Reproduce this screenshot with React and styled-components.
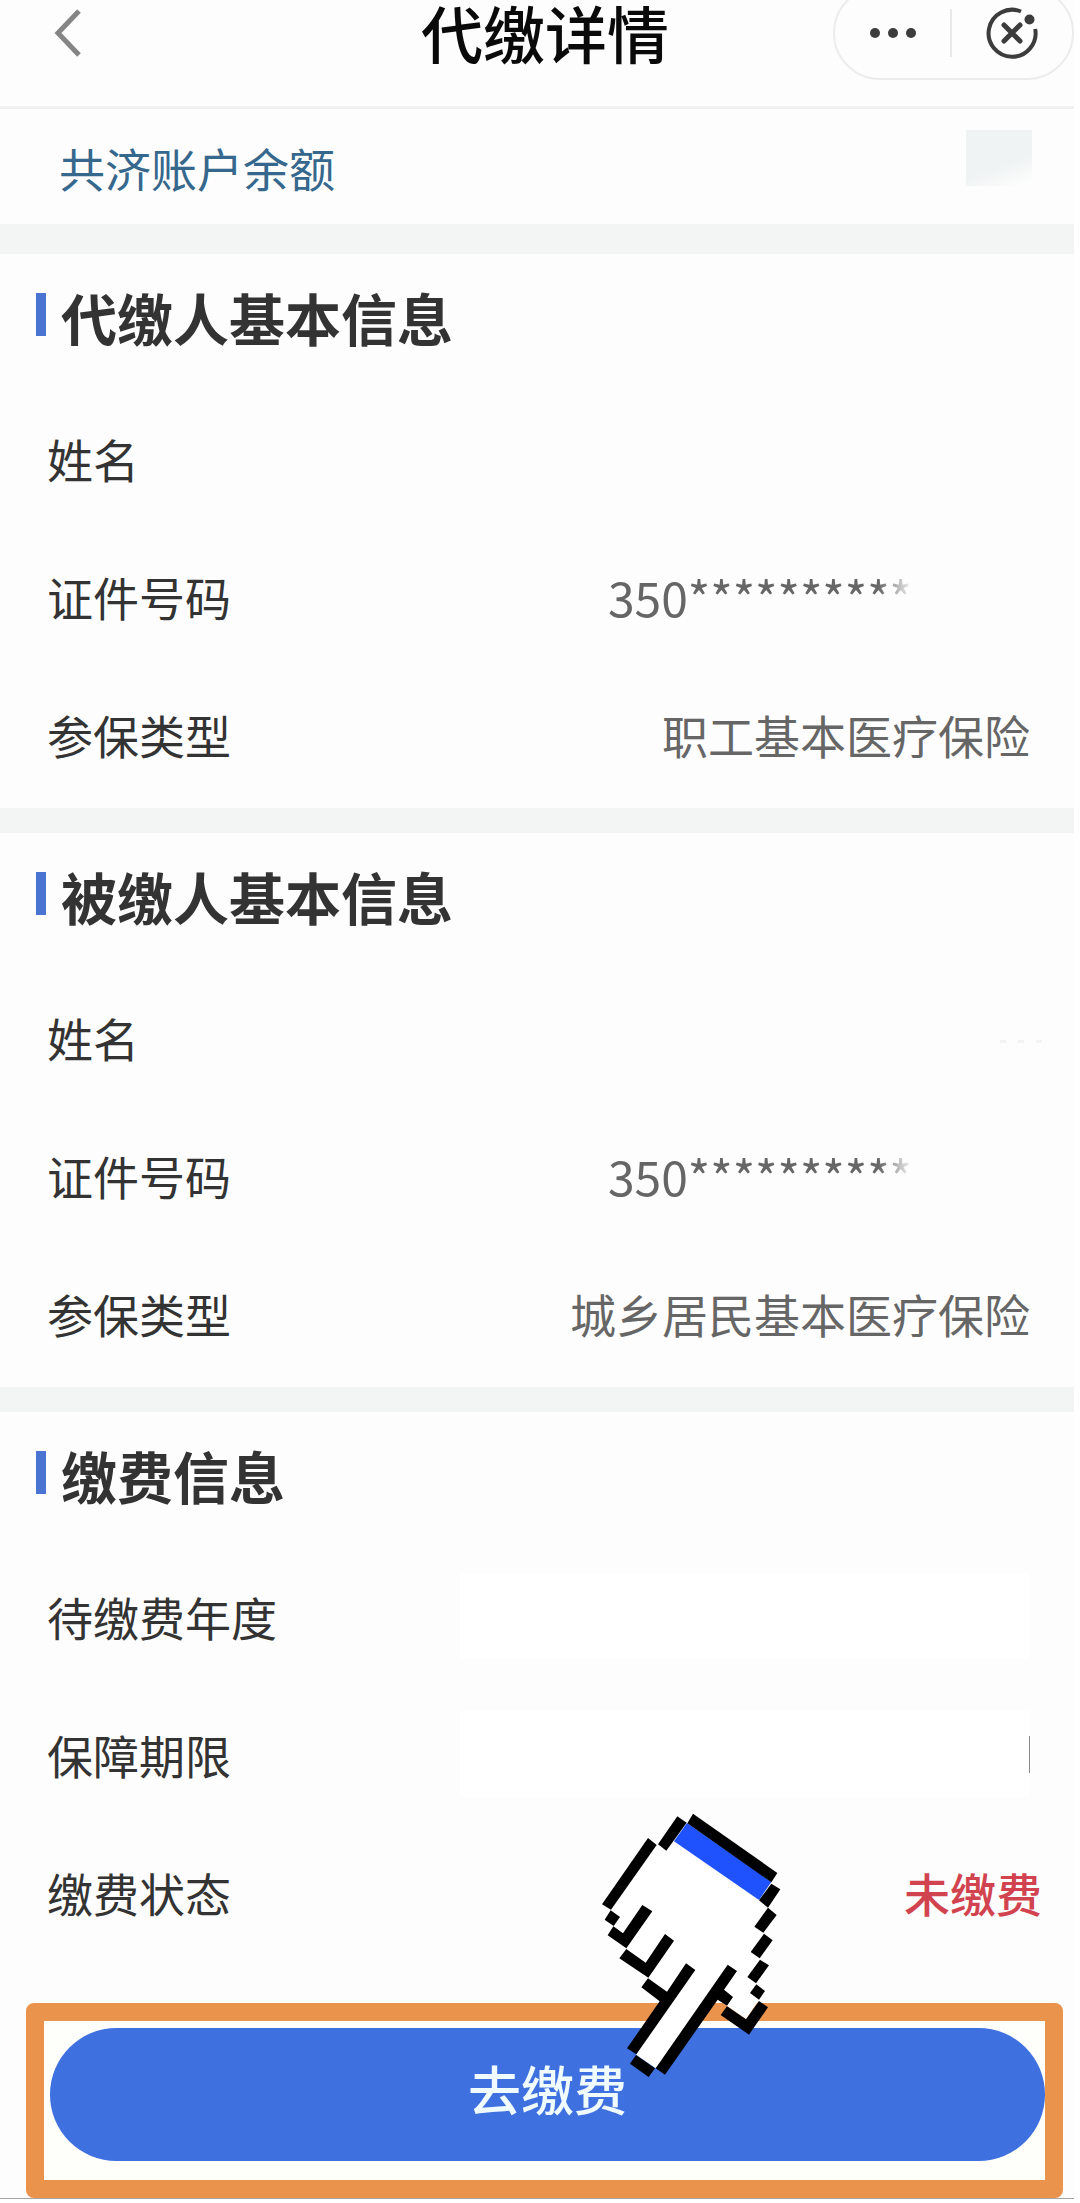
import React from 'react';
import styled, { createGlobalStyle } from 'styled-components';


const GlobalStyle = createGlobalStyle`
    * {
        box-sizing: border-box;
    }

    body {
        margin: 0;
        background-color: #ffffff;
        font-family: 'Noto Sans CJK SC', 'Noto Sans', sans-serif;
        color: #333333;
    }

    h1, h2, dl, dt, dd {
        margin: 0;
    }

    button {
        padding: 0;
        border: none;
        background: none;
        font-family: inherit;
        cursor: pointer;
    }
`;

const Page = styled.div`
    display: flow-root;
    margin: 0 6px 0 0;
    background-color: #fdfdfd;
    overflow: hidden;
`;

const Header = styled.header`
    display: grid;
    grid-template-columns: 1fr auto 1fr;
    align-items: center;
    margin: -14px 0 0 0;
    padding: 0 0 26px 16px;
    border-bottom: 3px solid #f1f1f1;
`;

const BackButton = styled.button`
    display: flex;
    justify-content: center;
    align-items: center;
    width: 104px;
    height: 94px;
`;

const HeaderTitle = styled.h1`
    padding: 0 0 2px 0;
    color: #0a0a0a;
    font-size: 62px;
    line-height: 62px;
    font-weight: 500;
`;

const Capsule = styled.div`
    display: flex;
    align-items: center;
    justify-self: end;
    width: 241px;
    height: 94px;
    border: 2px solid #ececec;
    border-radius: 47px;
`;

const CapsuleButton = styled.button`
    display: flex;
    justify-content: center;
    align-items: center;
    flex: ${props => props.$grow};
    height: 90px;
`;

const CapsuleDivider = styled.div`
    width: 2px;
    height: 48px;
    background-color: #e8e8e8;
`;

const BalanceRow = styled.div`
    display: flex;
    justify-content: space-between;
    align-items: flex-start;
    height: 115px;
    padding: 21px 42px 0 59px;
`;

const BalanceLabel = styled.div`
    padding: 2px 0 0 0;
    color: #35688c;
    font-size: 46px;
    line-height: 70px;
`;

const BalanceCover = styled.div`
    width: 66px;
    height: 56px;
    background: linear-gradient(160deg, #eff3f3 60%, #fdfdfd 95%);
`;

const Divider = styled.div`
    height: ${props => props.$size}px;
    background-color: #f3f5f5;
`;

const SectionContainer = styled.section`
    padding: 35px 0 2px 0;
`;

const SectionTitle = styled.h2`
    display: flex;
    align-items: flex-start;
    gap: 15px;
    margin: 0 0 47px 36px;
    font-size: 56px;
    line-height: 56px;
    font-weight: 700;

    &::before {
        content: '';
        width: 10px;
        height: 43px;
        margin: 4px 0 0 0;
        background-color: #4a74d2;
    }
`;

const Row = styled.div`
    display: flex;
    justify-content: space-between;
    align-items: center;
    height: 138px;
    padding: 0 44px 6px 47px;
    font-size: 46px;
    line-height: 70px;
`;

const Value = styled.dd`
    color: #666666;
`;

const MaskedNumber = styled(Value)`
    padding: 0 118px 0 0;
    font-size: 48px;
    mask-image: linear-gradient(to right, #000 270px, transparent 306px);
`;

const MaskedName = styled(Value)`
    display: flex;
    gap: 12px;
    margin: 0 -12px 0 0;
    padding: 8px 0 0 0;

    span {
        width: 6px;
        height: 3px;
        background-color: #f3f3f3;
    }
`;

const BlankValue = styled(Value)`
    width: 58%;
    height: 86px;
    background-color: #ffffff;
`;

const CursorValue = styled(BlankValue)`
    display: flex;
    justify-content: flex-end;
    align-items: center;

    &::after {
        content: '';
        width: 1px;
        height: 37px;
        background-color: #8a8a8a;
    }
`;

const StatusValue = styled.dd`
    margin: 0 -12px 0 0;
    color: #d1434f;
    font-weight: 500;
`;

const Footer = styled.footer`
    position: relative;
    padding: 37px 11px 0 26px;
    border-bottom: 1px solid #a5a5a5;
`;

const PayFrame = styled.div`
    padding: 7px 0 19px 6px;
    border: 18px solid #e9934c;
    border-radius: 8px;
    background-color: #fefefb;
`;

const PayButton = styled.button`
    display: block;
    width: 100%;
    height: 133px;
    padding: 0 0 14px 0;
    border-radius: 67px;
    background-color: #3e70e0;
    color: #f0fbff;
    font-size: 53px;
    line-height: 70px;
    font-weight: 500;
`;

const HandImg = styled.svg`
    position: absolute;
    left: 56%;
    bottom: 121px;
    width: 180px;
    height: 264px;
    pointer-events: none;
`;

const BottomSpace = styled.div`
    height: 4px;
    background-color: #ffffff;
`;

function BackIcon() {
    return (
        <svg width="32" height="50" viewBox="0 0 32 50" fill="none">
            <path d="M27 3 L6 25 L27 47" stroke="#858585" strokeWidth="5" />
        </svg>
    );
}

function MoreIcon() {
    return (
        <svg width="48" height="12" viewBox="0 0 48 12" fill="#3c3c3c">
            <circle cx="6" cy="6" r="5" />
            <circle cx="24" cy="6" r="5" />
            <circle cx="42" cy="6" r="5" />
        </svg>
    );
}

function CloseIcon() {
    return (
        <svg width="54" height="54" viewBox="0 0 54 54" fill="none" stroke="#3c3c3c" strokeWidth="4">
            <path d="M36 5.5 A23.5 23.5 0 1 0 50.2 23" />
            <path d="M19 19 L35 35 M35 19 L19 35" strokeWidth="5" strokeLinecap="round" />
            <circle cx="44.5" cy="13.5" r="5" fill="#3c3c3c" stroke="none" />
        </svg>
    );
}

function Hand() {
    return (
        <HandImg viewBox="126 96 540 792" aria-hidden="true">
            <polygon fill="#ffffff" points="384,127 637,304 627,380 614,456 602,534 591,608 600,657 561,715 504,675 476,656 290,862 231,821 330,655 267,591 202,503 163,436 170,410 156,387 293,192 322,209 345,181" />
            <polygon fill="#1f51fd" points="384,126 637,303 600,357 345,181" />
            <g fill="#000000">
                <polygon points="402,98 655,276 637,304 385,127" />
                <polygon points="355,106 383,125 322,209 297,190" />
                <polygon points="267,171 293,192 156,386 129,370" />
                <polygon points="155,388 183,408 164,435 137,416" />
                <polygon points="163,436 192,457 250,372 280,391 202,502 146,463" />
                <polygon points="202,504 260,545 318,459 345,479 268,590 181,532" />
                <polygon points="267,592 324,632 381,547 409,567 232,820 204,802 302,661 247,619" />
                <polygon points="231,822 288,862 269,888 213,848" />
                <polygon points="506,551 534,570 495,626 522,648 504,674 476,656 318,881 290,862" />
                <polygon points="504,676 561,715 600,660 627,679 570,761 485,702" />
                <polygon points="592,610 618,630 600,656 573,636" />
                <polygon points="603,536 630,553 591,607 565,588" />
                <polygon points="615,458 641,478 602,532 575,513" />
                <polygon points="627,380 653,402 613,455 586,437" />
                <polygon points="637,308 664,325 627,380 600,358" />
            </g>
        </HandImg>
    );
}

function Section({ title, children }) {
    return (
        <SectionContainer>
            <SectionTitle>{title}</SectionTitle>
            <dl>{children}</dl>
        </SectionContainer>
    );
}

export default function App() {
    return (
        <>
            <GlobalStyle />
            <Page>
                <Header>
                    <BackButton aria-label="返回"><BackIcon /></BackButton>
                    <HeaderTitle>代缴详情</HeaderTitle>
                    <Capsule>
                        <CapsuleButton $grow={23} aria-label="更多"><MoreIcon /></CapsuleButton>
                        <CapsuleDivider />
                        <CapsuleButton $grow={24} aria-label="关闭"><CloseIcon /></CapsuleButton>
                    </Capsule>
                </Header>

                <BalanceRow>
                    <BalanceLabel>共济账户余额</BalanceLabel>
                    <BalanceCover />
                </BalanceRow>
                <Divider $size={30} />

                <Section title="代缴人基本信息">
                    <Row>
                        <dt>姓名</dt>
                        <Value />
                    </Row>
                    <Row>
                        <dt>证件号码</dt>
                        <MaskedNumber>350**********</MaskedNumber>
                    </Row>
                    <Row>
                        <dt>参保类型</dt>
                        <Value>职工基本医疗保险</Value>
                    </Row>
                </Section>
                <Divider $size={25} />

                <Section title="被缴人基本信息">
                    <Row>
                        <dt>姓名</dt>
                        <MaskedName><span /><span /><span /></MaskedName>
                    </Row>
                    <Row>
                        <dt>证件号码</dt>
                        <MaskedNumber>350**********</MaskedNumber>
                    </Row>
                    <Row>
                        <dt>参保类型</dt>
                        <Value>城乡居民基本医疗保险</Value>
                    </Row>
                </Section>
                <Divider $size={25} />

                <Section title="缴费信息">
                    <Row>
                        <dt>待缴费年度</dt>
                        <BlankValue />
                    </Row>
                    <Row>
                        <dt>保障期限</dt>
                        <CursorValue />
                    </Row>
                    <Row>
                        <dt>缴费状态</dt>
                        <StatusValue>未缴费</StatusValue>
                    </Row>
                </Section>

                <Footer>
                    <PayFrame>
                        <PayButton>去缴费</PayButton>
                    </PayFrame>
                    <Hand />
                </Footer>
                <BottomSpace />
            </Page>
        </>
    );
}
